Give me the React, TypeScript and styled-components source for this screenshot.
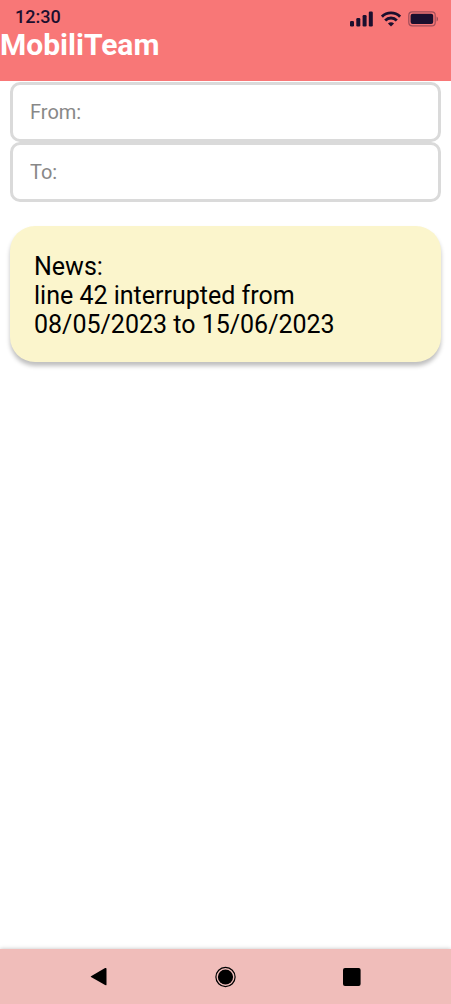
import React from "react";
import styled, { createGlobalStyle } from "styled-components";

const GlobalStyle = createGlobalStyle`
  *, *::before, *::after { box-sizing: border-box; }
  body {
    margin: 0;
    background: #ffffff;
    font-family: Roboto, "Liberation Sans", sans-serif;
  }
`;

const Screen = styled.div`
  min-height: 100vh;
  display: flex;
  flex-direction: column;
`;

const Header = styled.header`
  display: flex;
  flex-direction: column;
  padding: 8px 0 18px;
  background: #f87777;
`;

const StatusBar = styled.div`
  display: flex;
  align-items: flex-start;
  justify-content: space-between;
  padding: 0 12px 0 15px;
  height: 19px;
  color: #1b0f2e;
`;

const Clock = styled.time`
  font-size: 18px;
  line-height: 18px;
  font-weight: 500;
`;

const StatusIcons = styled.div`
  display: flex;
  align-items: center;
  gap: 7px;
  padding-top: 3px;

  svg { display: block; }
`;

const Title = styled.h1`
  margin: 0;
  font-size: 30px;
  line-height: 36px;
  font-weight: 700;
  color: #ffffff;
`;

const Main = styled.main`
  flex: 1;
  display: flex;
  flex-direction: column;
  gap: 24px;
  padding: 1px 10px 24px;
`;

const SearchForm = styled.form`
  display: flex;
  flex-direction: column;
`;

const Field = styled.input`
  width: 100%;
  height: 60px;
  padding: 0 17px 1px;
  border: 3px solid #dadada;
  border-radius: 10px;
  background: #ffffff;
  font: inherit;
  font-size: 20px;
  color: #222222;
  outline: none;

  &::placeholder { color: #888888; opacity: 1; }
  &:focus { border-color: #f97777; }
`;

const NewsCard = styled.section`
  padding: 26px 24px 23px;
  border-radius: 25px;
  background: #fbf5cc;
  box-shadow: 0 4px 4px rgba(0, 0, 0, 0.25);
  color: #000000;
  font-size: 25px;
  line-height: 29px;
`;

const NewsHeading = styled.h2`
  margin: 0;
  font: inherit;
`;

const NewsText = styled.p`
  margin: 0;
  max-width: 320px;
`;

const NavBar = styled.nav`
  display: grid;
  grid-template-columns: repeat(3, 1fr);
  height: 55px;
  padding: 0 36px;
  background: #f0bdba;
  box-shadow: 0 0 4px rgba(0, 0, 0, 0.25);
`;

const NavButton = styled.button`
  display: flex;
  align-items: center;
  justify-content: center;
  padding: 0;
  border: 0;
  background: none;
  color: #000000;
  cursor: pointer;
`;

const SignalIcon = () => (
  <svg width="24" height="16" viewBox="0 0 24 16" fill="currentColor" aria-hidden="true">
    <rect x="0" y="10" width="4" height="5.5" rx="1.2" />
    <rect x="6.3" y="7" width="4" height="8.5" rx="1.2" />
    <rect x="12.6" y="4" width="4" height="11.5" rx="1.2" />
    <rect x="18.8" y="0.5" width="4" height="15" rx="1.2" />
  </svg>
);

const WifiIcon = () => (
  <svg width="20" height="16" viewBox="0 0 20 16" fill="none" stroke="currentColor" strokeWidth="2.9" aria-hidden="true">
    <path d="M0.9 5.6A13 13 0 0 1 19.1 5.6" />
    <path d="M4.2 9.4A8.2 8.2 0 0 1 15.8 9.4" />
    <path d="M10 15.6 6.9 12.6A4.5 4.5 0 0 1 13.1 12.6Z" fill="currentColor" stroke="none" />
  </svg>
);

const BatteryIcon = () => (
  <svg width="31" height="16" viewBox="0 0 31 16" aria-hidden="true">
    <rect x="0.8" y="0.9" width="26.4" height="13.9" rx="3.4" fill="none" stroke="currentColor" strokeOpacity="0.4" strokeWidth="1.2" />
    <rect x="2.6" y="2.8" width="22.6" height="10.2" rx="2" fill="currentColor" />
    <path d="M28.6 5.4V10.4C30.4 9.6 30.4 6.2 28.6 5.4Z" fill="currentColor" fillOpacity="0.45" />
  </svg>
);

const BackIcon = () => (
  <svg width="18" height="20" viewBox="0 0 18 20" fill="currentColor" aria-hidden="true">
    <path d="M1 9.3 15.1 1.1Q16.5 0.6 16.5 1.8V17.4Q16.5 18.6 15.1 18.1L1 10.1Q0.4 9.7 1 9.3Z" />
  </svg>
);

const HomeIcon = () => (
  <svg width="21" height="22" viewBox="0 0 21 22" aria-hidden="true">
    <circle cx="10.5" cy="11" r="9.6" fill="none" stroke="currentColor" strokeWidth="1.2" />
    <circle cx="10.5" cy="11" r="7.6" fill="currentColor" />
  </svg>
);

const RecentsIcon = () => (
  <svg width="18" height="18" viewBox="0 0 18 18" fill="currentColor" aria-hidden="true">
    <rect x="0" y="0" width="17.6" height="18" rx="2" />
  </svg>
);

export default function App() {
  return (
    <>
      <GlobalStyle />
      <Screen>
        <Header>
          <StatusBar>
            <Clock>12:30</Clock>
            <StatusIcons>
              <SignalIcon />
              <WifiIcon />
              <BatteryIcon />
            </StatusIcons>
          </StatusBar>
          <Title>MobiliTeam</Title>
        </Header>
        <Main>
          <SearchForm onSubmit={(event: React.FormEvent) => event.preventDefault()}>
            <Field type="text" name="from" aria-label="From" placeholder="From:" />
            <Field type="text" name="to" aria-label="To" placeholder="To:" />
          </SearchForm>
          <NewsCard>
            <NewsHeading>News:</NewsHeading>
            <NewsText>line 42 interrupted from 08/05/2023 to 15/06/2023</NewsText>
          </NewsCard>
        </Main>
        <NavBar aria-label="System">
          <NavButton type="button" aria-label="Back"><BackIcon /></NavButton>
          <NavButton type="button" aria-label="Home"><HomeIcon /></NavButton>
          <NavButton type="button" aria-label="Recent apps"><RecentsIcon /></NavButton>
        </NavBar>
      </Screen>
    </>
  );
}
